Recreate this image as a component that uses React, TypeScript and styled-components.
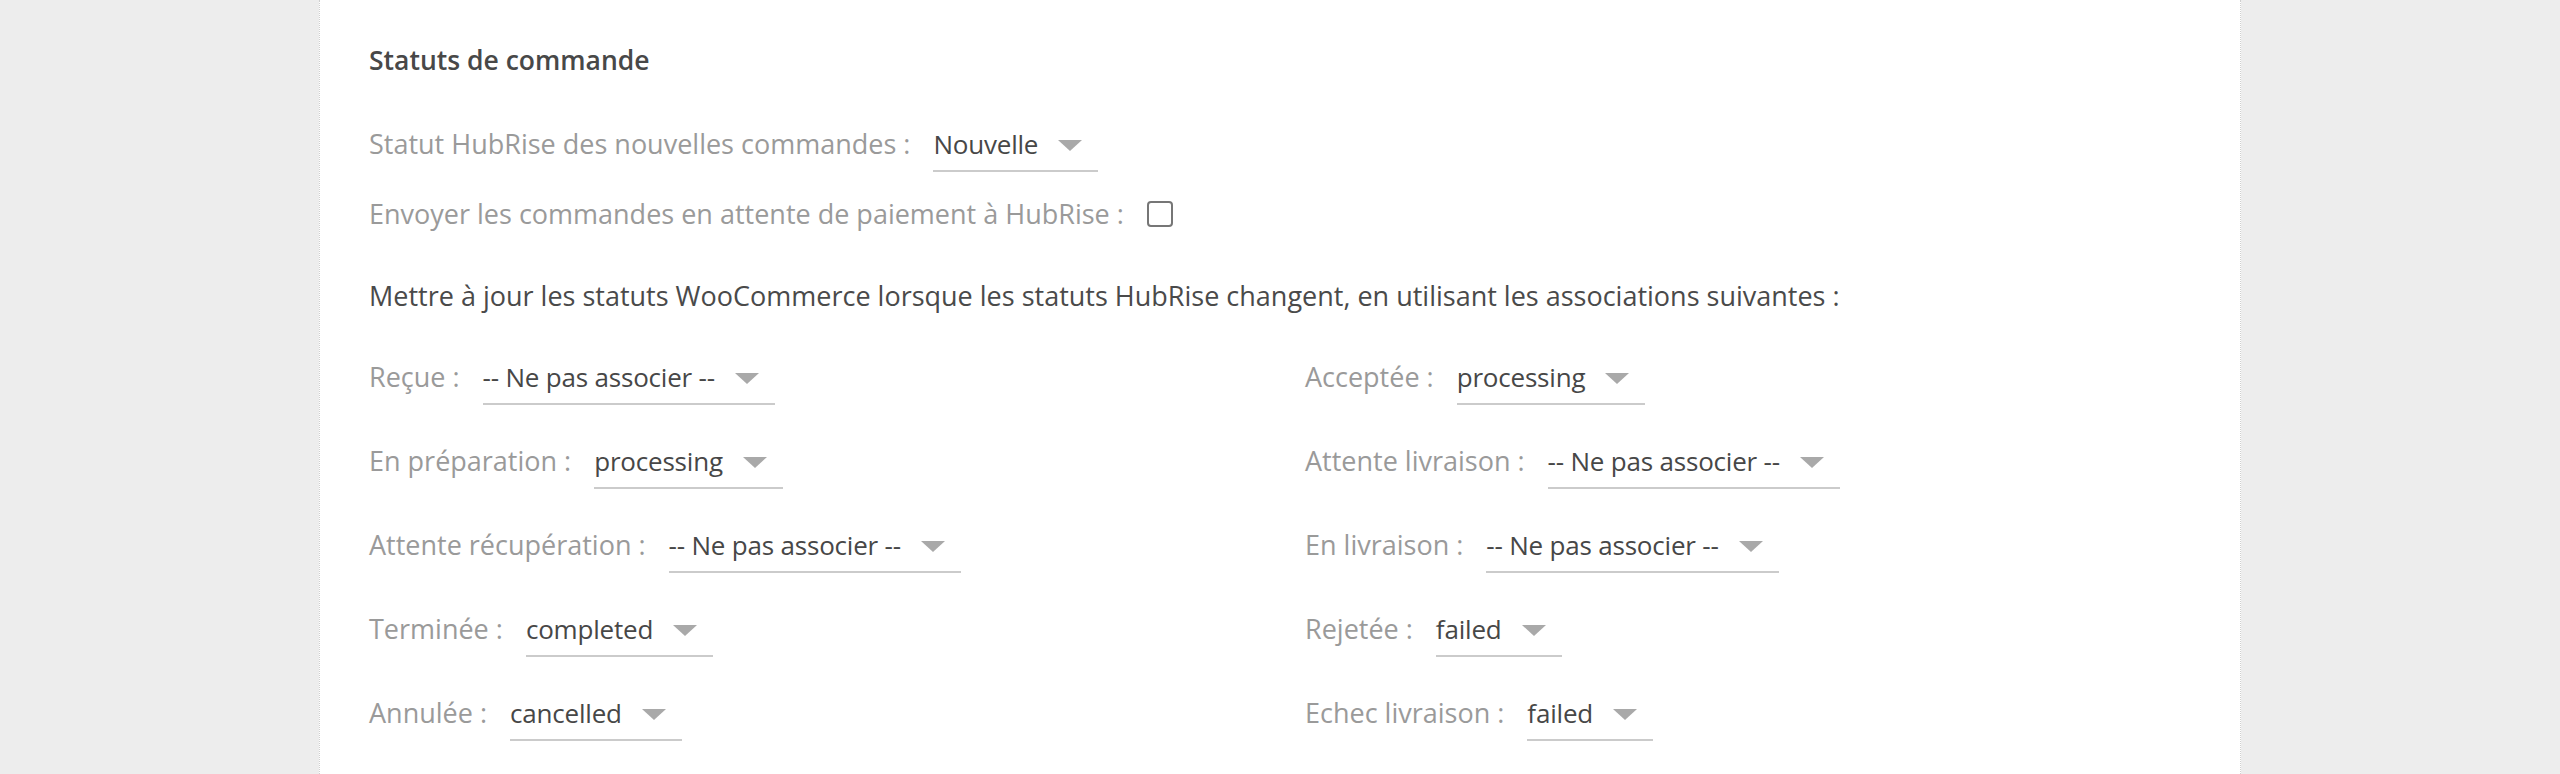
import React from "react";
import styled, { createGlobalStyle } from "styled-components";

const GlobalStyle = createGlobalStyle`
  html, body {
    margin: 0;
    padding: 0;
    background: #ededed;
  }
  body {
    font-family: "Open Sans", Roboto, "Liberation Sans", sans-serif;
    -webkit-font-smoothing: antialiased;
  }
`;

const Page = styled.div`
  width: 1922px;
  min-height: 774px;
  margin: 0 auto;
  box-sizing: border-box;
  background: #ffffff;
  border-left: 1px dotted #cfcfcf;
  border-right: 1px dotted #cfcfcf;
  padding: 40px 49px 0;
  font-size: 27px;
  line-height: 40px;
`;

const Title = styled.h2`
  margin: 0;
  font-size: 26.5px;
  line-height: 40px;
  font-weight: 600;
  color: #484848;
`;

const Row = styled.div<{ $top: number }>`
  display: flex;
  align-items: flex-start;
  gap: 23px;
  margin-top: ${(p) => p.$top}px;
`;

const Label = styled.span`
  color: #9a9a9a;
  white-space: nowrap;
`;

const Note = styled.p`
  margin: 42px 0 0;
  color: #4a4a4a;
`;

const Grid = styled.div`
  display: grid;
  grid-template-columns: 1fr 1fr;
  column-gap: 50px;
  row-gap: 36px;
  margin-top: 41px;
`;

const SelectBox = styled.div`
  display: inline-flex;
  align-items: center;
  gap: 20px;
  padding: 0 16px 6px 0;
  border-bottom: 2px solid #cbcbcb;
  color: #474747;
  font-size: 26px;
  letter-spacing: -0.2px;
  white-space: nowrap;
  cursor: pointer;
`;

const Caret = styled.svg`
  width: 24px;
  height: 11px;
  flex: none;
  margin-top: 2px;
`;

const CheckBox = styled.input`
  appearance: none;
  margin: 7px 0 0;
  width: 26px;
  height: 26px;
  box-sizing: border-box;
  border: 2px solid #767676;
  border-radius: 4px;
  background: #fff;
`;

const Select: React.FC<{ value: string }> = ({ value }) => (
  <SelectBox>
    <span>{value}</span>
    <Caret viewBox="0 0 24 11">
      <path d="M0 0 H24 L12 11 Z" fill="#a9a9a9" />
    </Caret>
  </SelectBox>
);

const mappings: [string, string][] = [
  ["Reçue :", "-- Ne pas associer --"],
  ["Acceptée :", "processing"],
  ["En préparation :", "processing"],
  ["Attente livraison :", "-- Ne pas associer --"],
  ["Attente récupération :", "-- Ne pas associer --"],
  ["En livraison :", "-- Ne pas associer --"],
  ["Terminée :", "completed"],
  ["Rejetée :", "failed"],
  ["Annulée :", "cancelled"],
  ["Echec livraison :", "failed"],
];

const App: React.FC = () => {
  return (
    <>
      <GlobalStyle />
      <Page>
        <Title>Statuts de commande</Title>
        <Row $top={44}>
          <Label>Statut HubRise des nouvelles commandes :</Label>
          <Select value="Nouvelle" />
        </Row>
        <Row $top={22}>
          <Label>Envoyer les commandes en attente de paiement à HubRise :</Label>
          <CheckBox type="checkbox" />
        </Row>
        <Note>
          Mettre à jour les statuts WooCommerce lorsque les statuts HubRise changent, en
          utilisant les associations suivantes :
        </Note>
        <Grid>
          {mappings.map(([label, value]) => (
            <Row key={label} $top={0}>
              <Label>{label}</Label>
              <Select value={value} />
            </Row>
          ))}
        </Grid>
      </Page>
    </>
  );
};

export default App;
